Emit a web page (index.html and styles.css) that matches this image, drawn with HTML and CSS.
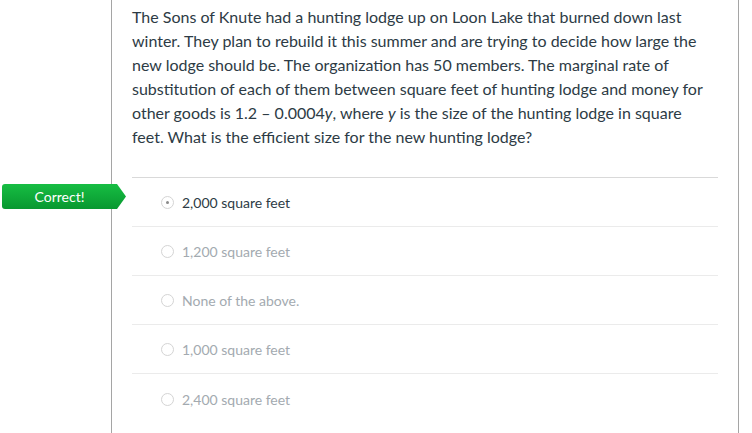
FILE: index.html
```html
<!DOCTYPE html>
<html lang="en">
<head>
<meta charset="utf-8">
<title>Quiz question</title>
<link rel="stylesheet" href="styles.css">
</head>
<body>
<div class="page">
  <div class="gutter"></div>
  <div class="question">
    <div class="question-text"><p>The Sons of Knute had a hunting lodge up on Loon Lake that burned down last winter. They plan to rebuild it this summer and are trying to decide how large the new lodge should be. The organization has 50 members. The marginal rate of substitution of each of them between square feet of hunting lodge and money for other goods is 1.2 – 0.0004<em>y</em>, where <em>y</em> is the size of the hunting lodge in square feet. What is the efficient size for the new hunting lodge?</p></div>
    <div class="answers">
      <div class="answer selected">
        <span class="badge">Correct!</span>
        <span class="radio"></span>
        <span class="label">2,000 square feet</span>
      </div>
      <div class="answer">
        <span class="radio"></span>
        <span class="label">1,200 square feet</span>
      </div>
      <div class="answer">
        <span class="radio"></span>
        <span class="label">None of the above.</span>
      </div>
      <div class="answer">
        <span class="radio"></span>
        <span class="label">1,000 square feet</span>
      </div>
      <div class="answer">
        <span class="radio"></span>
        <span class="label">2,400 square feet</span>
      </div>
    </div>
  </div>
</div>
</body>
</html>
```
FILE: styles.css
```css
html, body {
  margin: 0;
  padding: 0;
  background: #ffffff;
}

body {
  font-family: Lato, "Noto Sans", sans-serif;
  color: #2d3b45;
  overflow: hidden;
}

.page {
  display: flex;
  min-height: 433px;
}

.gutter {
  width: 111px;
  flex: none;
}

.question {
  width: 586px;
  flex: none;
  border-left: 1px solid #a5a5a5;
  border-right: 1px solid #a5a5a5;
  padding: 5px 20px 0 20px;
}

.question-text {
  font-size: 16px;
  line-height: 24px;
  padding-bottom: 28px;
  border-bottom: 1px solid #d9d9d9;
}

.question-text p {
  margin: 0;
  padding-right: 10px;
}

.question-text em {
  font-style: italic;
}

.answers {
  display: flex;
  flex-direction: column;
}

.answer {
  position: relative;
  display: flex;
  align-items: center;
  height: 49px;
  padding-top: 1px;
  box-sizing: border-box;
  border-bottom: 1px solid #ebebeb;
  color: #a3aab0;
  font-size: 14px;
}

.answer:last-child {
  border-bottom: none;
}

.answer.selected {
  color: #2d3b45;
}

.radio {
  width: 11px;
  height: 11px;
  border: 1px solid #d4d4d4;
  border-radius: 50%;
  margin-left: 29px;
  margin-right: 8px;
  display: flex;
  align-items: center;
  justify-content: center;
  flex: none;
}

.selected .radio::after {
  content: "";
  width: 3px;
  height: 3px;
  border-radius: 50%;
  background: #8a8a8a;
}

.badge {
  position: absolute;
  left: -130px;
  top: 6px;
  width: 124px;
  height: 25px;
  box-sizing: border-box;
  padding-right: 9px;
  border-radius: 3px 0 0 3px;
  background: linear-gradient(#17bd43, #089830);
  clip-path: polygon(0 0, 115px 0, 124px 50%, 115px 100%, 0 100%);
  color: #ffffff;
  font-size: 14px;
  line-height: 25px;
  text-align: center;
}
```
